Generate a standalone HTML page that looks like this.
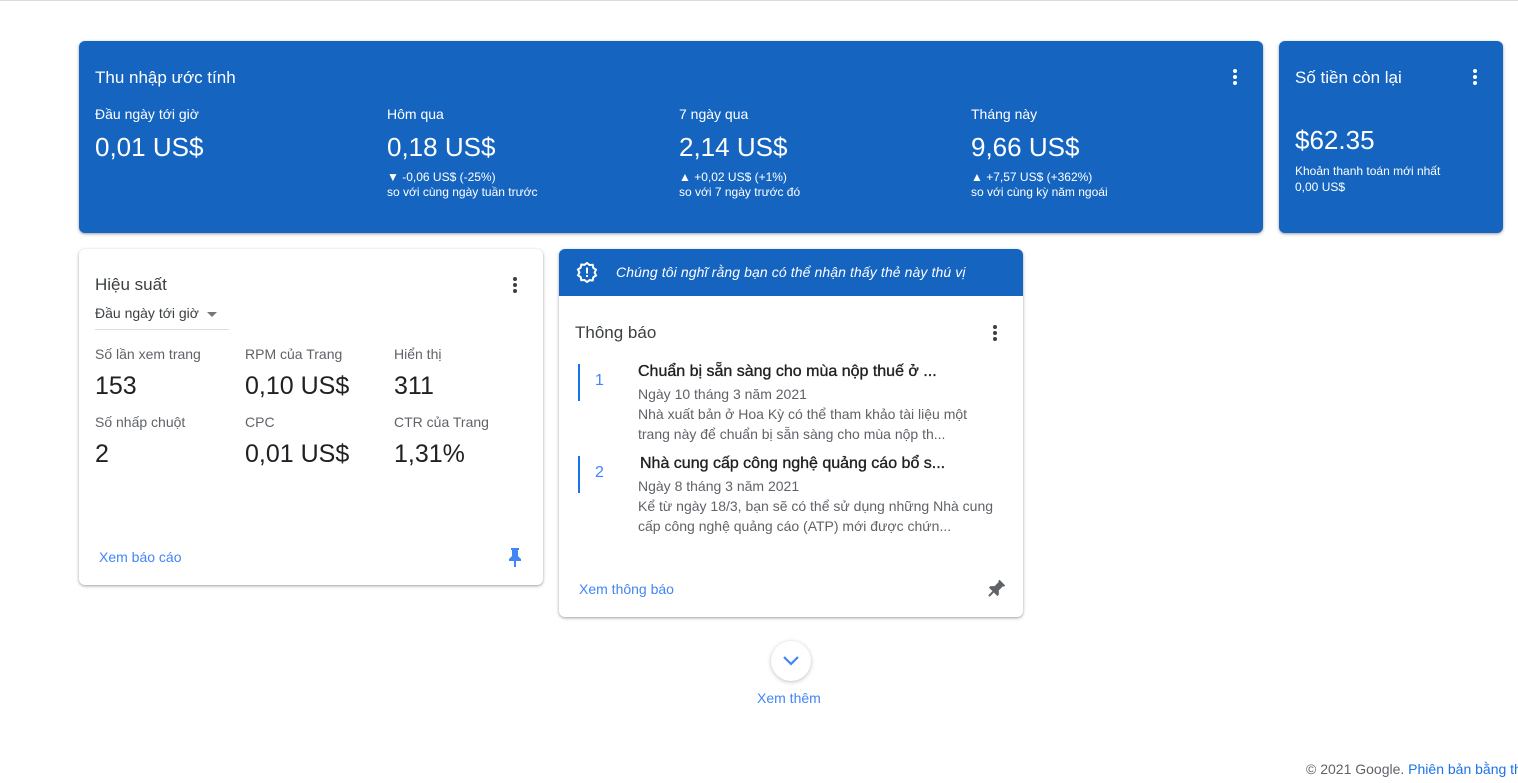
<!DOCTYPE html>
<html><head><meta charset="utf-8"><style>
*{box-sizing:border-box;margin:0;padding:0}
body{width:1518px;height:783px;background:#fff;font-family:"Liberation Sans",Arial,sans-serif;position:relative;overflow:hidden;color:#202124}
.topline{position:absolute;left:0;top:0;width:1518px;height:1px;background:#dadce0}
.card{position:absolute;border-radius:6px;box-shadow:0 1px 3px rgba(0,0,0,.3),0 1px 2px rgba(0,0,0,.1)}
.blue{background:#1565c0;color:#fff}
.abs{position:absolute;white-space:nowrap}
.dots{position:absolute;width:4px}
.dots i{display:block;width:4px;height:4px;border-radius:50%;background:currentColor;margin-bottom:2px}
.link{color:#4285f4;font-size:14px}
.ttl{font-size:16px;color:#202124;-webkit-text-stroke:0.35px #202124}
</style></head><body>
<div class="topline"></div>

<div class="card blue" style="left:79px;top:41px;width:1184px;height:192px">
  <div class="abs" style="left:16px;top:27px;font-size:17px">Thu nhập ước tính</div>
  <div class="dots" style="left:1154px;top:28px;color:#fff"><i></i><i></i><i></i></div>
  <div class="abs" style="left:16px;top:65px;font-size:14px">Đầu ngày tới giờ</div>
  <div class="abs" style="left:16px;top:91px;font-size:26px">0,01 US$</div>
  <div class="abs" style="left:308px;top:65px;font-size:14px">Hôm qua</div>
  <div class="abs" style="left:308px;top:91px;font-size:26px">0,18 US$</div>
  <div class="abs" style="left:308px;top:129px;font-size:12px;line-height:15px">▼ -0,06 US$ (-25%)<br>so với cùng ngày tuần trước</div>
  <div class="abs" style="left:600px;top:65px;font-size:14px">7 ngày qua</div>
  <div class="abs" style="left:600px;top:91px;font-size:26px">2,14 US$</div>
  <div class="abs" style="left:600px;top:129px;font-size:12px;line-height:15px">▲ +0,02 US$ (+1%)<br>so với 7 ngày trước đó</div>
  <div class="abs" style="left:892px;top:65px;font-size:14px">Tháng này</div>
  <div class="abs" style="left:892px;top:91px;font-size:26px">9,66 US$</div>
  <div class="abs" style="left:892px;top:129px;font-size:12px;line-height:15px">▲ +7,57 US$ (+362%)<br>so với cùng kỳ năm ngoái</div>
</div>

<div class="card blue" style="left:1279px;top:41px;width:224px;height:192px">
  <div class="abs" style="left:16px;top:27px;font-size:17px">Số tiền còn lại</div>
  <div class="dots" style="left:194px;top:28px;color:#fff"><i></i><i></i><i></i></div>
  <div class="abs" style="left:16px;top:84px;font-size:26px">$62.35</div>
  <div class="abs" style="left:16px;top:122px;font-size:12px;line-height:16px">Khoản thanh toán mới nhất<br>0,00 US$</div>
</div>

<div class="card" style="left:79px;top:249px;width:464px;height:336px;background:#fff">
  <div class="abs" style="left:16px;top:26px;font-size:17px;color:#3c4043">Hiệu suất</div>
  <div class="dots" style="left:434px;top:28px;color:#3c4043"><i></i><i></i><i></i></div>
  <div class="abs" style="left:16px;top:56px;font-size:14px;color:#3c4043">Đầu ngày tới giờ <span style="display:inline-block;border-left:5px solid transparent;border-right:5px solid transparent;border-top:5px solid #777;vertical-align:middle;margin-left:4px"></span></div>
  <div class="abs" style="left:16px;top:80px;width:134px;height:1px;background:#dadce0"></div>
  <div class="abs" style="left:16px;top:97px;font-size:14px;color:#5f6368">Số lần xem trang</div>
  <div class="abs" style="left:16px;top:123px;font-size:25px">153</div>
  <div class="abs" style="left:166px;top:97px;font-size:14px;color:#5f6368">RPM của Trang</div>
  <div class="abs" style="left:166px;top:123px;font-size:25px">0,10 US$</div>
  <div class="abs" style="left:315px;top:97px;font-size:14px;color:#5f6368">Hiển thị</div>
  <div class="abs" style="left:315px;top:123px;font-size:25px">311</div>
  <div class="abs" style="left:16px;top:165px;font-size:14px;color:#5f6368">Số nhấp chuột</div>
  <div class="abs" style="left:16px;top:191px;font-size:25px">2</div>
  <div class="abs" style="left:166px;top:165px;font-size:14px;color:#5f6368">CPC</div>
  <div class="abs" style="left:166px;top:191px;font-size:25px">0,01 US$</div>
  <div class="abs" style="left:315px;top:165px;font-size:14px;color:#5f6368">CTR của Trang</div>
  <div class="abs" style="left:315px;top:191px;font-size:25px">1,31%</div>
  <div class="abs link" style="left:20px;top:300px">Xem báo cáo</div>
  <svg class="abs" style="left:429px;top:298px" width="14" height="20" viewBox="0 0 14 20"><path d="M3 1h8v2h-1v6l3 3v2H8v6H6v-6H1v-2l3-3V3H3z" fill="#4285f4"/></svg>
</div>

<div class="card" style="left:559px;top:249px;width:464px;height:368px;background:#fff;overflow:hidden">
  <div class="blue" style="position:absolute;left:0;top:0;width:464px;height:47px"></div>
  <svg class="abs" style="left:17px;top:12px" width="22" height="22" viewBox="0 0 22 22"><path d="M11 2l2.5 2 3.2-.2.6 3.1 2.7 1.8-1.4 2.9 1.4 2.9-2.7 1.8-.6 3.1-3.2-.2L11 21l-2.5-2-3.2.2-.6-3.1L2 14.3l1.4-2.9L2 8.5l2.7-1.8.6-3.1 3.2.2z" fill="none" stroke="#fff" stroke-width="2"/><rect x="10" y="6.5" width="2" height="6" fill="#fff"/><rect x="10" y="14" width="2" height="2" fill="#fff"/></svg>
  <div class="abs" style="left:57px;top:15px;font-size:14px;font-style:italic;color:#fff;letter-spacing:0.1px">Chúng tôi nghĩ rằng bạn có thể nhận thấy thẻ này thú vị</div>
  <div class="abs" style="left:16px;top:74px;font-size:17px;color:#3c4043">Thông báo</div>
  <div class="dots" style="left:434px;top:76px;color:#3c4043"><i></i><i></i><i></i></div>
  <div class="abs" style="left:19px;top:115px;width:2px;height:37px;background:#1a73e8"></div>
  <div class="abs" style="left:36px;top:123px;font-size:16px;color:#4285f4">1</div>
  <div class="abs ttl" style="left:79px;top:114px">Chuẩn bị sẵn sàng cho mùa nộp thuế ở ...</div>
  <div class="abs" style="left:79px;top:135px;font-size:14px;color:#5f6368;line-height:20px">Ngày 10 tháng 3 năm 2021<br>Nhà xuất bản ở Hoa Kỳ có thể tham khảo tài liệu một<br>trang này để chuẩn bị sẵn sàng cho mùa nộp th...</div>
  <div class="abs" style="left:19px;top:207px;width:2px;height:37px;background:#1a73e8"></div>
  <div class="abs" style="left:36px;top:215px;font-size:16px;color:#4285f4">2</div>
  <div class="abs ttl" style="left:81px;top:206px">Nhà cung cấp công nghệ quảng cáo bổ s...</div>
  <div class="abs" style="left:79px;top:227px;font-size:14px;color:#5f6368;line-height:20px">Ngày 8 tháng 3 năm 2021<br>Kể từ ngày 18/3, bạn sẽ có thể sử dụng những Nhà cung<br>cấp công nghệ quảng cáo (ATP) mới được chứn...</div>
  <div class="abs link" style="left:20px;top:332px">Xem thông báo</div>
  <svg class="abs" style="left:427px;top:330px" width="20" height="20" viewBox="0 0 20 20"><g transform="rotate(45 10 10)"><path d="M6 1h8v2h-1v6l3 3v2h-5v6H9v-6H4v-2l3-3V3H6z" fill="#5f6368"/></g></svg>
</div>

<div class="abs" style="left:771px;top:641px;width:40px;height:40px;border-radius:50%;background:#fff;box-shadow:0 1px 4px rgba(0,0,0,.25)"></div>
<svg class="abs" style="left:782px;top:655px" width="18" height="12" viewBox="0 0 18 12"><path d="M2 2l7 7 7-7" fill="none" stroke="#4285f4" stroke-width="2.2"/></svg>
<div class="abs link" style="left:757px;top:690px">Xem thêm</div>

<div class="abs" style="left:1306px;top:761px;font-size:14px;color:#5f6368">© 2021 Google. <span style="color:#1a73e8">Phiên bản bằng th</span></div>
</body></html>
